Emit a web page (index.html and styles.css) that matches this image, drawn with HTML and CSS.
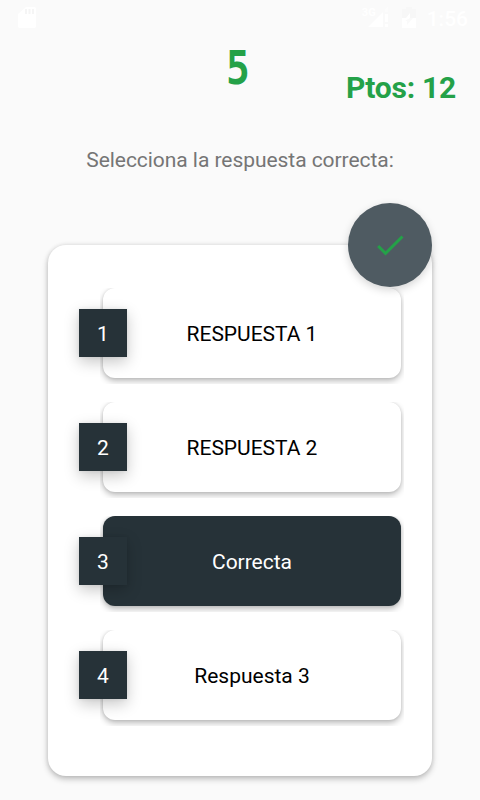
FILE: index.html
```html
<!DOCTYPE html>
<html lang="es">
<head>
<meta charset="utf-8">
<title>Quiz</title>
<link rel="stylesheet" href="styles.css">
</head>
<body>
<div class="status">
  <svg class="sd" width="20" height="24" viewBox="0 0 20 24"><path fill="#fff" d="M8 1H16Q18 1 18 3V20Q18 22 16 22H2Q0 22 0 20V8Z"/><path stroke="#f5f5f5" stroke-width="2" d="M8 3V8M11.5 3V8M15 3V8"/></svg>
  <div class="status-right">
    <span class="net">3G</span>
    <svg class="signal" width="21" height="21" viewBox="0 0 21 21"><path fill="#fff" d="M0 20L15 5V20ZM17 7H20V15H17ZM17 17H20V20H17Z"/><path fill="#fcfcfc" d="M17 2L20 0V5H17Z"/></svg>
    <svg class="battery" width="14" height="23" viewBox="0 0 14 23"><path fill="#f7f7f7" d="M4 1H10V3H14V12H0V3H4Z"/><path fill="#fff" d="M0 12H4L8 7V12H14V22H0Z"/><path fill="#fafafa" d="M8 12H11L5 19V15H3Z"/></svg>
    <span class="time">1:56</span>
  </div>
</div>
<header class="top">
  <div class="timer"><span>5</span></div>
  <div class="points">Ptos: 12</div>
</header>
<p class="question">Selecciona la respuesta correcta:</p>
<main class="card">
  <div class="badge">
    <svg width="36" height="36" viewBox="0 0 24 24"><path fill="#24a148" d="M9 16.17L4.83 12l-1.42 1.41L9 19 21 7l-1.41-1.41z"/></svg>
  </div>
  <div class="row"><div class="num">1</div><div class="answer">RESPUESTA 1</div></div>
  <div class="row"><div class="num">2</div><div class="answer">RESPUESTA 2</div></div>
  <div class="row"><div class="num">3</div><div class="answer selected">Correcta</div></div>
  <div class="row"><div class="num">4</div><div class="answer">Respuesta 3</div></div>
</main>
</body>
</html>
```
FILE: styles.css
```css
* { box-sizing: border-box; }
body {
  margin: 0;
  width: 480px;
  height: 800px;
  overflow: hidden;
  background: #fafafa;
  font-family: Roboto, "Liberation Sans", sans-serif;
  font-size: 21px;
}
.status {
  height: 36px;
  display: flex;
  justify-content: space-between;
  padding: 6px 12px 0 18px;
  color: #fff;
}
.status-right { display: flex; align-items: flex-start; }
.net { font-size: 11px; line-height: 12px; font-weight: 700; margin: 1px -8px 0 0; }
.signal { margin: 1px 13px 0 0; }
.battery { margin: 0 11px 0 0; }
.time { line-height: 26px; font-weight: 500; }
.top {
  height: 94px;
  display: grid;
  grid-template-columns: 1fr 54px 1fr;
}
.timer {
  grid-column: 2;
  padding: 4px 4px 0 0;
  color: #24a148;
  font: 700 46px/56px "DejaVu Sans Mono", monospace;
  text-align: center;
}
.timer span { display: inline-block; transform: scaleX(.86); }
.points {
  padding: 34px 24px 0 0;
  color: #24a148;
  font-size: 30px;
  line-height: 35px;
  font-weight: 700;
  letter-spacing: -.25px;
  text-align: right;
  white-space: nowrap;
}
.question {
  margin: 18px 0 0;
  color: #757575;
  line-height: 25px;
  letter-spacing: -.05px;
  text-align: center;
}
.card {
  position: relative;
  width: 384px;
  height: 531px;
  margin: 72px 48px 0;
  padding: 43px 31px 0;
  display: flex;
  flex-direction: column;
  gap: 24px;
  background: #fff;
  border-radius: 18px;
  box-shadow: 0 3px 6px rgba(0,0,0,.24), 0 0 4px rgba(0,0,0,.1);
}
.badge {
  position: absolute;
  z-index: 2;
  top: -42px;
  right: 0;
  width: 84px;
  height: 84px;
  display: grid;
  place-items: center;
  border-radius: 50%;
  background: #4f5b62;
  box-shadow: 0 3px 9px rgba(0,0,0,.17);
}
.row { display: flex; align-items: center; height: 90px; }
.num {
  position: relative;
  z-index: 1;
  flex: 0 0 48px;
  height: 48px;
  margin-right: -24px;
  background: #263238;
  color: #fff;
  line-height: 50px;
  text-align: center;
  box-shadow: 0 5px 14px rgba(0,0,0,.22), 0 0 4px rgba(0,0,0,.07);
}
.answer {
  flex: 0 0 298px;
  height: 90px;
  border-radius: 12px;
  background: #fff;
  color: #000;
  line-height: 92px;
  letter-spacing: -.02px;
  text-align: center;
  box-shadow: 0 3px 6px rgba(0,0,0,.27), 0 0 3px rgba(0,0,0,.1);
  clip-path: inset(0 -3px -6px -3px);
}
.selected { background: #263238; color: #fff; }
```
